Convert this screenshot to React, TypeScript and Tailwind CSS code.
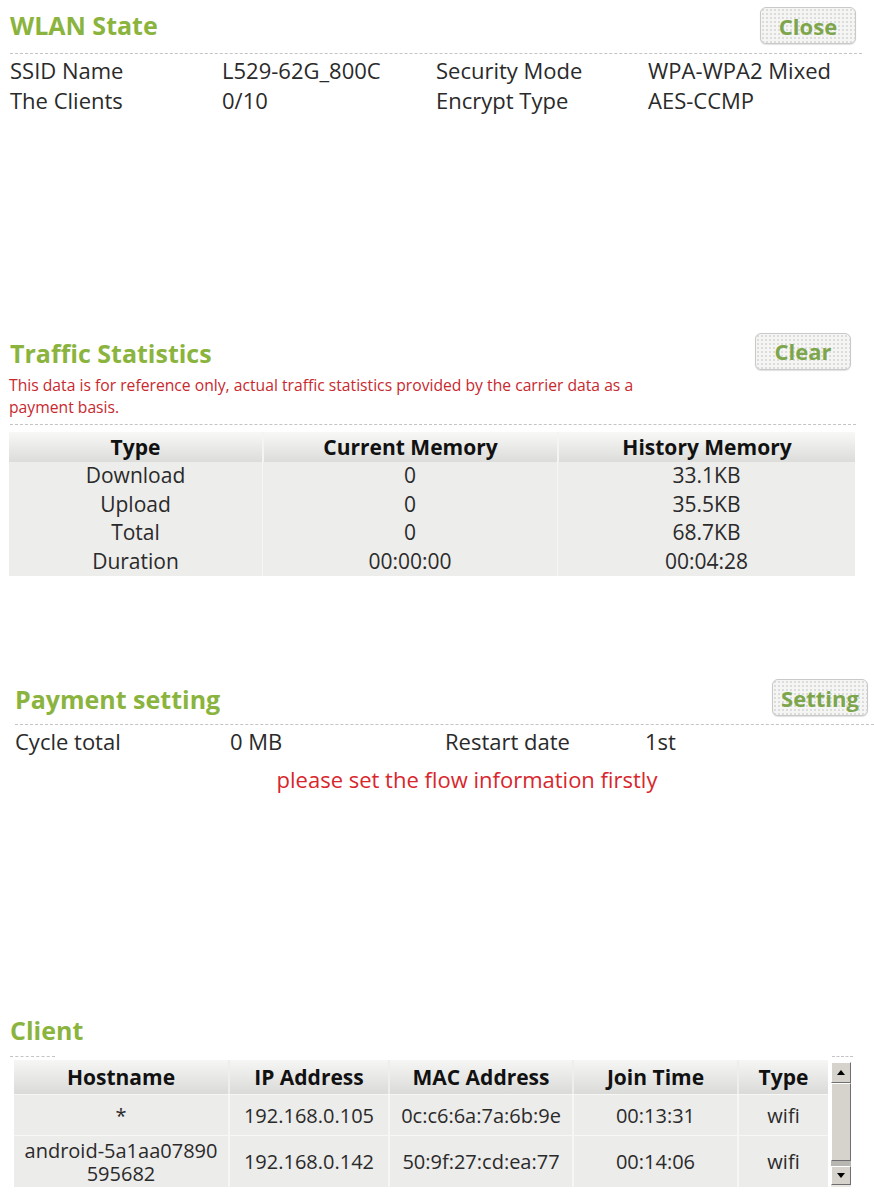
import React from "react";

const green = "text-[#8ab43e]";

function Btn({ label }: { label: string }) {
  return (
    <div className="flex h-[37px] w-[96px] items-center justify-center rounded-[6px] border border-[#c9c9c9] bg-[#f5f5f3] bg-[radial-gradient(#dcdcdc_0.8px,transparent_0.8px)] bg-[length:4px_4px] shadow-[0_1px_1px_rgba(0,0,0,0.12)]">
      <span className="text-[22px] font-bold leading-none text-[#7da64c]">{label}</span>
    </div>
  );
}

function Dashed({ className }: { className: string }) {
  return <div className={"border-t border-dashed border-[#c4c4c4] " + className} />;
}

function ScrollBar() {
  return (
    <div className="mt-[2px] flex h-[125px] w-[20px] flex-col bg-[#e8e6e1]">
      <div className="flex h-[21px] items-center justify-center border border-t-white border-l-white border-r-[#6f6f6f] border-b-[#6f6f6f] bg-[#d6d3cc]">
        <svg width="8" height="5" viewBox="0 0 8 5">
          <polygon points="0,5 4,0 8,5" fill="#000" />
        </svg>
      </div>
      <div className="h-[78px] border border-t-white border-l-white border-r-[#6f6f6f] border-b-[#6f6f6f] bg-[#d6d3cc]" />
      <div className="h-[5px] bg-[radial-gradient(#b8b6b0_0.8px,transparent_0.8px)] bg-[length:2px_2px]" />
      <div className="flex h-[19px] items-center justify-center border border-t-white border-l-white border-r-[#6f6f6f] border-b-[#6f6f6f] bg-[#d6d3cc]">
        <svg width="8" height="5" viewBox="0 0 8 5">
          <polygon points="0,0 8,0 4,5" fill="#000" />
        </svg>
      </div>
    </div>
  );
}

export default function App() {
  const traffic = [
    ["Download", "0", "33.1KB"],
    ["Upload", "0", "35.5KB"],
    ["Total", "0", "68.7KB"],
    ["Duration", "00:00:00", "00:04:28"],
  ];
  const clientCols = ["w-[214px]", "w-[160px]", "w-[184px]", "w-[165px]", "w-[91px]"];
  const clients = [
    ["*", "192.168.0.105", "0c:c6:6a:7a:6b:9e", "00:13:31", "wifi"],
    ["android-5a1aa07890 595682", "192.168.0.142", "50:9f:27:cd:ea:77", "00:14:06", "wifi"],
  ];
  return (
    <div className="min-h-[1204px] w-[874px] bg-white font-['Open_Sans',sans-serif] text-[#2a2a2a]">
      {/* WLAN State */}
      <div className="pt-[7px]">
        <div className="flex h-[37px] items-center justify-between pl-[10px] pr-[18px]">
          <h2 className={"text-[25px] font-bold leading-none " + green}>WLAN State</h2>
          <Btn label="Close" />
        </div>
        <Dashed className="ml-[10px] mr-[12px] mt-[9px]" />
        <div className="mt-[1px] grid grid-cols-[212px_214px_212px_1fr] pl-[10px] text-[22px] leading-[30px]">
          <div>SSID Name</div>
          <div>L529-62G_800C</div>
          <div>Security Mode</div>
          <div>WPA-WPA2 Mixed</div>
          <div>The Clients</div>
          <div>0/10</div>
          <div>Encrypt Type</div>
          <div>AES-CCMP</div>
        </div>
      </div>

      {/* Traffic Statistics */}
      <div className="mt-[218px]">
        <div className="flex h-[36px] items-center justify-between pl-[10px] pr-[23px]">
          <h2 className={"mt-[4px] text-[25px] font-bold leading-none " + green}>Traffic Statistics</h2>
          <Btn label="Clear" />
        </div>
        <p className="ml-[9px] mt-[5px] w-[665px] text-[15.7px] leading-[22px] text-[#c8282e]">
          This data is for reference only, actual traffic statistics provided by the carrier data as a payment basis.
        </p>
        <Dashed className="ml-[10px] mr-[18px] mt-[6px]" />
        <div className="ml-[9px] mt-[7px] w-[846px] bg-[#ededeb] text-[21px]">
          <div className="flex h-[30px] bg-gradient-to-b from-[#f8f8f7] to-[#dcdcda] font-bold leading-[30px] text-[#111]">
            <div className="w-[253px] text-center">Type</div>
            <div className="w-[295px] border-l-2 border-[#f4f4f2] text-center">Current Memory</div>
            <div className="flex-1 border-l-2 border-[#f4f4f2] text-center">History Memory</div>
          </div>
          {traffic.map((r) => (
            <div key={r[0]} className="flex h-[28.5px] leading-[26px]">
              <div className="w-[253px] text-center">{r[0]}</div>
              <div className="w-[295px] border-l border-[#f6f6f4] text-center">{r[1]}</div>
              <div className="flex-1 border-l border-[#f6f6f4] text-center">{r[2]}</div>
            </div>
          ))}
        </div>
      </div>

      {/* Payment setting */}
      <div className="mt-[103px]">
        <div className="flex h-[37px] items-center justify-between pl-[15px] pr-[6px]">
          <h2 className={"mt-[3px] text-[25px] font-bold leading-none " + green}>Payment setting</h2>
          <Btn label="Setting" />
        </div>
        <Dashed className="ml-[15px] mt-[8px]" />
        <div className="mt-[1px] grid grid-cols-[215px_215px_200px_1fr] pl-[15px] text-[22px] leading-[30px]">
          <div>Cycle total</div>
          <div>0 MB</div>
          <div>Restart date</div>
          <div>1st</div>
        </div>
        <div className="mt-[8px] flex justify-center pl-[60px] text-[22px] leading-[30px] text-[#d8262c]">
          please set the flow information firstly
        </div>
      </div>

      {/* Client */}
      <div className="mt-[221px]">
        <h2 className={"pl-[10px] text-[25px] font-bold leading-[30px] " + green}>Client</h2>
        <div className="mt-[11px] flex">
          <Dashed className="ml-[10px] w-[45px]" />
          <div className="flex-1" />
          <Dashed className="mr-[21px] w-[21px]" />
        </div>
        <div className="mt-[3px] flex">
          <div className="ml-[14px] w-[814px] text-[20px]">
            <div className="flex h-[34px] bg-gradient-to-b from-[#f6f6f5] to-[#dadad8] text-[21px] font-bold leading-[34px] text-[#111]">
              {["Hostname", "IP Address", "MAC Address", "Join Time", "Type"].map((h, i) => (
                <div key={h} className={clientCols[i] + " text-center " + (i > 0 ? "border-l-2 border-[#eeeeec]" : "")}>
                  {h}
                </div>
              ))}
            </div>
            {clients.map((r, ri) => (
              <div key={ri} className={"flex border-t border-[#f7f7f6] " + (ri === 0 ? "h-[41px]" : "h-[52px]")}>
                {r.map((c, i) => (
                  <div
                    key={i}
                    className={
                      clientCols[i] +
                      " flex items-center justify-center bg-[#ececea] text-center leading-[23px] " +
                      (i > 0 ? "border-l-2 border-[#f6f6f5]" : "")
                    }
                  >
                    {i === 0 && ri === 1 ? (
                      <span>
                        android-5a1aa07890
                        <br />
                        595682
                      </span>
                    ) : (
                      c
                    )}
                  </div>
                ))}
              </div>
            ))}
          </div>
          <div className="ml-[3px]">
            <ScrollBar />
          </div>
        </div>
      </div>
    </div>
  );
}
